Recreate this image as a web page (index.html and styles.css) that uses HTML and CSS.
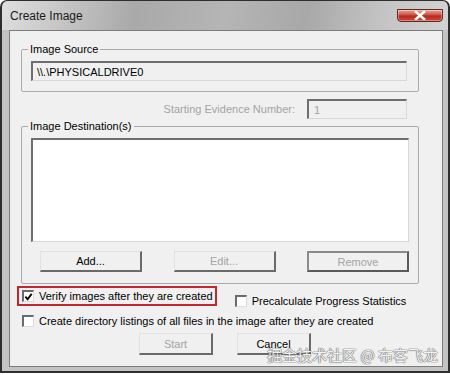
FILE: index.html
```html
<!DOCTYPE html>
<html lang="en">
<head>
    <meta charset="UTF-8">
    <meta name="viewport" content="width=device-width, initial-scale=1.0">
    <title>Create Image</title>
    <link rel="stylesheet" href="styles.css">
</head>
<body>
    <div class="window">
        <div class="titlebar">
            <span class="title">Create Image</span>
            <button class="close-btn" title="Close">
                <svg width="14" height="9" viewBox="0 0 14 9">
                    <path d="M3 1 L11 8 M11 1 L3 8" stroke="#fff" stroke-width="2.6" stroke-linecap="square" fill="none"/>
                </svg>
            </button>
        </div>

        <div class="client">
            <fieldset class="group group-source">
                <legend>Image Source</legend>
                <div class="field field-wide">\\.\PHYSICALDRIVE0</div>
            </fieldset>

            <div class="evidence-row">
                <span class="muted">Starting Evidence Number:</span>
                <div class="field field-small muted">1</div>
            </div>

            <fieldset class="group group-dest">
                <legend>Image Destination(s)</legend>
                <div class="listbox"></div>
                <div class="btn-row">
                    <button class="btn">Add...</button>
                    <button class="btn disabled">Edit...</button>
                    <button class="btn disabled default">Remove</button>
                </div>
            </fieldset>

            <div class="check-row">
                <label class="check highlight">
                    <span class="box">
                        <svg width="10" height="10" viewBox="0 0 10 10">
                            <path d="M1.5 4.5 L4 7.5 L8.5 1.5" stroke="#000" stroke-width="2" fill="none"/>
                        </svg>
                    </span>
                    Verify images after they are created
                </label>
                <label class="check precalc">
                    <span class="box"></span>
                    Precalculate Progress Statistics
                </label>
            </div>

            <div class="check-row second">
                <label class="check">
                    <span class="box"></span>
                    Create directory listings of all files in the image after they are created
                </label>
            </div>

            <div class="action-row">
                <button class="btn action disabled">Start</button>
                <button class="btn action">Cancel</button>
            </div>

            <!-- watermark from the source screenshot -->
            <div class="watermark">掘金技术社区 @ 布客飞龙</div>
        </div>
    </div>
</body>
</html>
```

FILE: styles.css
```css
body {
    margin: 0;
    padding: 0;
    background-color: #fff;
    font-family: "Liberation Sans", Arial, sans-serif;
    font-size: 11px;
    color: #000;
}

.window {
    width: 450px;
    height: 373px;
    box-sizing: border-box;
    border: 2px solid #2e2e2e;
    border-top-width: 1px;
    border-radius: 7px 7px 0 0;
    background: linear-gradient(100deg, #dedede 0%, #c9c9c9 12%, #a9a9a9 30%, #b5b5b5 50%, #a8a8a8 68%, #c4c4c4 85%, #d2d2d2 100%);
    background-size: 100% 29px;
    background-repeat: no-repeat;
    background-color: #c3c3c3;
}

.titlebar {
    height: 29px;
    display: flex;
    justify-content: space-between;
    align-items: flex-start;
}

.title {
    font-size: 12px;
    color: #1b1b1b;
    margin: 8px 0 0 8px;
}

.close-btn {
    width: 46px;
    height: 13px;
    margin: 8px 5px 0 0;
    padding: 0;
    border: 1px solid #5b2b27;
    border-radius: 0 0 4px 4px;
    background: linear-gradient(#e7a59c 0%, #d05a4e 40%, #b8281d 55%, #cf4a3e 100%);
    display: flex;
    justify-content: center;
    align-items: center;
    box-shadow: inset 0 0 0 1px rgba(255, 255, 255, 0.35);
}

.client {
    position: relative;
    width: 434px;
    height: 337px;
    box-sizing: border-box;
    margin-left: 7px;
    border: 1px solid #7c7c7c;
    background-color: #f0f0f0;
    overflow: hidden;
}

.group {
    width: 398px;
    box-sizing: border-box;
    margin: 0 0 0 11px;
    border: 1px solid #a9a9a9;
    border-radius: 2px;
    padding: 0 0 0 9px;
}

.group legend {
    padding: 0 2px;
    margin-left: -3px;
    line-height: 13px;
}

.group-source {
    margin-top: 12px;
    padding-top: 5px;
    padding-bottom: 10px;
}

.group-dest {
    margin-top: 1px;
    padding-top: 5px;
    padding-bottom: 11px;
}

.field {
    height: 20px;
    box-sizing: border-box;
    border-style: solid;
    border-width: 2px 1px 1px 2px;
    border-color: #6e6e6e #d8d8d8 #d8d8d8 #6e6e6e;
    background-color: #f0f0f0;
    padding: 2px 0 0 4px;
    line-height: 14px;
}

.field-wide {
    width: 376px;
}

.field-small {
    width: 100px;
    padding-left: 5px;
}

.muted {
    color: #a3a3a3;
}

.evidence-row {
    width: 386px;
    margin: 7px 0 0 11px;
    display: flex;
    justify-content: flex-end;
    align-items: center;
    gap: 12px;
}

.listbox {
    width: 378px;
    height: 104px;
    box-sizing: border-box;
    background-color: #fff;
    border-style: solid;
    border-width: 2px 1px 1px 2px;
    border-color: #6e6e6e #d8d8d8 #d8d8d8 #6e6e6e;
}

.btn-row {
    width: 369px;
    margin: 9px 0 0 9px;
    display: flex;
    justify-content: space-between;
}

.btn {
    width: 102px;
    height: 21px;
    box-sizing: border-box;
    padding: 0;
    font-family: inherit;
    font-size: 11px;
    color: #000;
    background-color: #f0f0f0;
    border-style: solid;
    border-width: 1px 2px 2px 1px;
    border-color: #e2e2e2 #6a6a6a #6a6a6a #e2e2e2;
}

.btn.disabled {
    color: #a3a3a3;
}

.btn.default {
    border-width: 2px;
    border-color: #8a8a8a #5a5a5a #5a5a5a #8a8a8a;
}

.check-row {
    display: flex;
    align-items: flex-start;
    margin: 2px 0 0 7px;
}

.check-row.second {
    margin: 6px 0 0 12px;
}

.check {
    display: flex;
    align-items: center;
    gap: 5px;
    line-height: 14px;
}

.check.highlight {
    height: 20px;
    box-sizing: border-box;
    border: 2px solid #c1272d;
    padding: 0 2px 0 3px;
}

.check.precalc {
    margin: 8px 0 0 18px;
}

.box {
    width: 12px;
    height: 12px;
    box-sizing: border-box;
    border-style: solid;
    border-width: 2px 1px 1px 2px;
    border-color: #6a6a6a #dcdcdc #dcdcdc #6a6a6a;
    background-color: #fff;
    display: flex;
    justify-content: center;
    align-items: center;
}

.action-row {
    display: flex;
    justify-content: center;
    gap: 24px;
    margin-top: 5px;
    padding-right: 2px;
}

.btn.action {
    width: 74px;
    height: 22px;
}

.watermark {
    position: absolute;
    right: 4px;
    bottom: 1px;
    font-family: "Noto Sans CJK SC", sans-serif;
    font-size: 15px;
    line-height: 20px;
    color: #f2f2f2;
    text-shadow: 0 0 1px #6a6a6a, 0 0 1px #6a6a6a, 0 0 1px #6a6a6a;
}
```
